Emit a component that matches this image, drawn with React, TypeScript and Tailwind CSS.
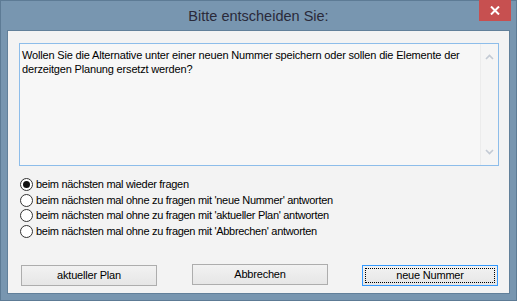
import React from "react";

const font = { fontFamily: '"Liberation Sans", Arial, sans-serif' };

function Radio({ checked, label }: { checked?: boolean; label: string }) {
  return (
    <div className="flex items-center h-[15.5px]">
      <div className="w-[13px] h-[13px] rounded-full border border-[#333333] bg-white flex items-center justify-center shrink-0">
        {checked && <div className="w-[7px] h-[7px] rounded-full bg-[#111111]" />}
      </div>
      <span className="ml-[3px] text-[11px] tracking-[-0.3px] text-black leading-none">{label}</span>
    </div>
  );
}

function Btn({ label, def, className }: { label: string; def?: boolean; className?: string }) {
  return (
    <div
      className={
        "w-[136px] h-[21px] border bg-gradient-to-b from-[#f2f2f2] to-[#e6e6e6] flex items-center justify-center relative " +
        (def ? "border-[#3399ff] " : "border-[#adadad] ") +
        (className || "")
      }
    >
      {def && <div className="absolute inset-[2px] border border-dotted border-black" />}
      <span className="text-[11px] tracking-[-0.2px] text-black leading-none">{label}</span>
    </div>
  );
}

export default function App() {
  return (
    <div
      className="w-[517px] h-[301px] bg-[#7896b0] border border-[#5d7b95] flex flex-col px-[6px] pb-[6px] relative"
      style={font}
    >
      <div className="h-[29px] flex items-center justify-center">
        <span className="text-[14.5px] text-[#2a2a3a] mt-[2px]">Bitte entscheiden Sie:</span>
      </div>
      <div className="absolute top-[-1px] right-[5px] w-[32px] h-[21px] bg-[#c75050] flex items-center justify-center">
        <svg width="10" height="9" viewBox="0 0 10 9">
          <path d="M1 0.5 L9 8.5 M9 0.5 L1 8.5" stroke="white" strokeWidth="2" />
        </svg>
      </div>
      <div className="flex-1 border border-[#62809a] bg-[#f3f3f3] flex flex-col">
        <div className="ml-[11px] mr-[10px] mt-[12px] h-[123px] border border-[#8dbdea] bg-[#f7f7f7] flex">
          <div className="flex-1 pl-[2px] pt-[4px] text-[11px] tracking-[-0.17px] leading-[14px] text-black">
            Wollen Sie die Alternative unter einer neuen Nummer speichern oder sollen die Elemente der derzeitgen Planung ersetzt werden?
          </div>
          <div className="w-[18px] border-l border-[#ececec] bg-[#f5f5f5] flex flex-col items-center justify-between py-[10px]">
            <svg width="9" height="6" viewBox="0 0 9 6">
              <path d="M1 5 L4.5 1.5 L8 5" stroke="#c3cad4" strokeWidth="1.6" fill="none" />
            </svg>
            <svg width="9" height="6" viewBox="0 0 9 6">
              <path d="M1 1 L4.5 4.5 L8 1" stroke="#c3cad4" strokeWidth="1.6" fill="none" />
            </svg>
          </div>
        </div>
        <div className="ml-[12px] mt-[11px] flex flex-col">
          <Radio checked label="beim nächsten mal wieder fragen" />
          <Radio label="beim nächsten mal ohne zu fragen mit 'neue Nummer' antworten" />
          <Radio label="beim nächsten mal ohne zu fragen mit 'aktueller Plan' antworten" />
          <Radio label="beim nächsten mal ohne zu fragen mit 'Abbrechen' antworten" />
        </div>
        <div className="mt-auto mb-[7px] ml-[13px] flex items-start">
          <Btn label="aktueller Plan" className="mt-[1px]" />
          <Btn label="Abbrechen" className="ml-[35px]" />
          <Btn label="neue Nummer" def className="ml-[34px] mt-[1px]" />
        </div>
      </div>
    </div>
  );
}
